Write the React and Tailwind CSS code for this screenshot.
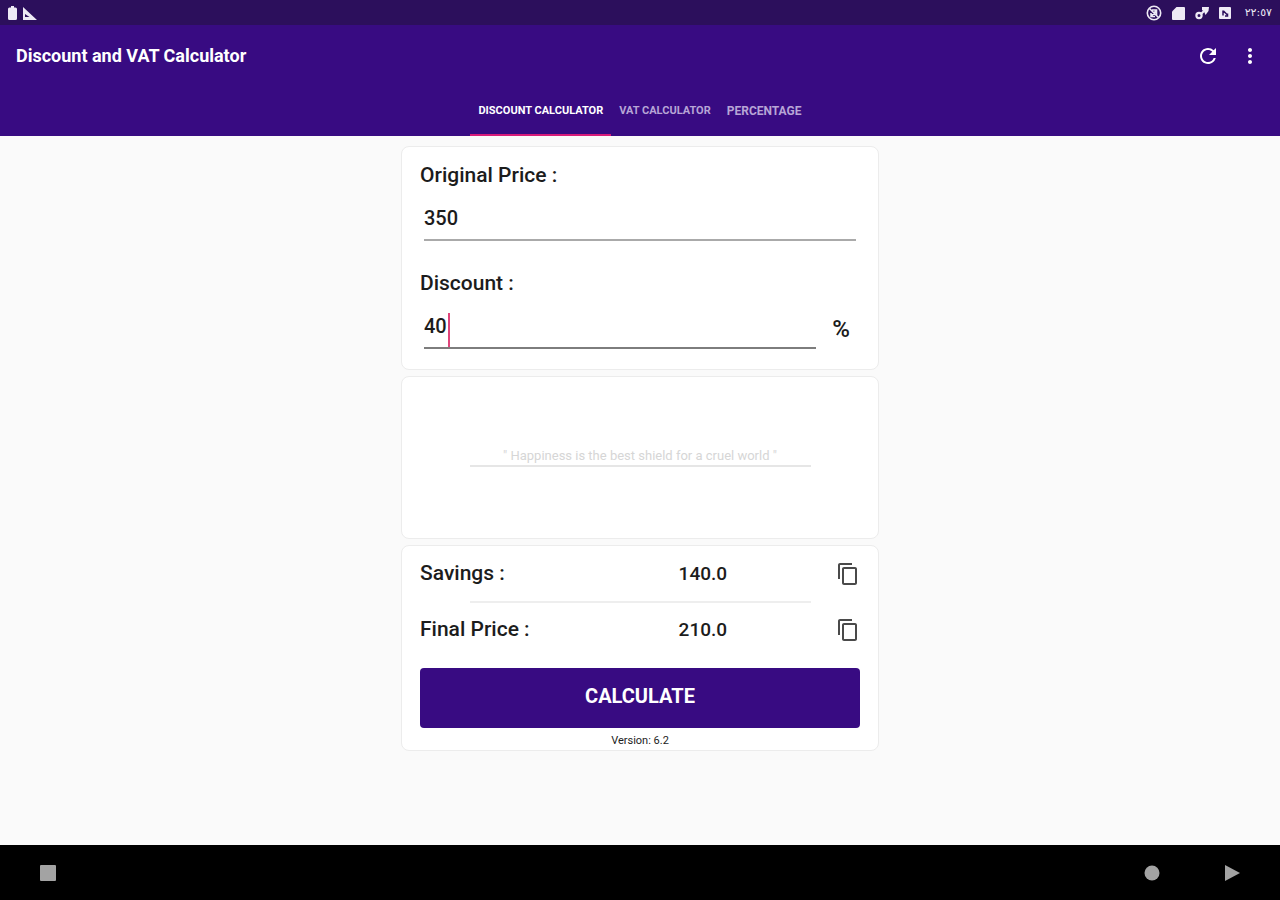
import { useState } from 'react';
import { MdContentCopy, MdMoreVert, MdRefresh } from 'react-icons/md';

const TABS = [
  { name: 'DISCOUNT CALCULATOR', size: 'text-[11px]' },
  { name: 'VAT CALCULATOR', size: 'text-[11px]' },
  { name: 'PERCENTAGE', size: 'text-xs' },
];

function StatusBar() {
  return (
    <div className="flex h-[25px] items-center justify-between bg-[#2c0f5c] px-2 text-[#eeeaf5]">
      <div className="flex items-center gap-1.5">
        <svg className="h-3.5 w-[9px]" viewBox="0 0 9 14" fill="currentColor">
          <path d="M3 0h3v1.500h1.500Q9 1.500 9 3v9.500Q9 14 7.500 14h-6Q0 14 0 12.500V3Q0 1.500 1.500 1.500H3z" />
        </svg>
        <svg className="h-3.5 w-3.5" viewBox="0 0 14 14" fill="currentColor" fillRule="evenodd">
          <path d="M0 1l14 13H0zM2 8v3h4.500z" />
        </svg>
      </div>
      <div className="flex items-center gap-2.5">
        <svg className="h-4 w-4" viewBox="0 0 16 16" fill="none" stroke="currentColor" strokeWidth="1.600">
          <circle cx="8" cy="8" r="6.700" />
          <path d="M3.500 3.500l9 9M5.500 11l5-6M6 5h4.500v5M5 8v3.500h4" />
        </svg>
        <svg className="h-3.5 w-[13px]" viewBox="0 0 13 14" fill="currentColor">
          <path d="M4.500 1H12q1 0 1 1v11q0 1-1 1H1q-1 0-1-1V5.500z" />
        </svg>
        <svg className="h-3.5 w-3.5" viewBox="0 0 14 14" fill="none" stroke="currentColor" strokeWidth="2.200">
          <circle cx="4" cy="9.500" r="2.600" />
          <path d="M6 8l3-3" />
          <path d="M7 1h7l-.5 4-3 4-1.500-3.500L7 4z" fill="currentColor" stroke="none" />
        </svg>
        <svg className="h-3 w-3" viewBox="0 0 12 12">
          <rect width="12" height="12" rx="1" fill="currentColor" />
          <path d="M4 3.500v5M4.500 4l4 4M8.500 6.500V9H6" stroke="#2c0f5c" strokeWidth="1.500" fill="none" />
        </svg>
        <span className="pl-1 font-['DejaVu_Sans',sans-serif] text-[11px] leading-3">٢٢:٥٧</span>
      </div>
    </div>
  );
}

function Header({ tab, onTab, onReset }) {
  return (
    <header className="bg-[#380b82] text-white">
      <div className="flex h-[61px] items-center justify-between pl-4 pr-[18px]">
        <h1 className="text-lg font-bold">Discount and VAT Calculator</h1>
        <div className="flex items-center gap-[18px]">
          <button type="button" aria-label="Refresh" onClick={onReset}>
            <MdRefresh className="h-6 w-6" />
          </button>
          <button type="button" aria-label="More options">
            <MdMoreVert className="h-6 w-6" />
          </button>
        </div>
      </div>
      <nav className="flex h-[50px] justify-center">
        {TABS.map(({ name, size }) => (
          <button
            key={name}
            type="button"
            onClick={() => onTab(name)}
            className={`border-b-2 px-2 pt-0.5 font-bold ${size} ${
              name === tab ? 'border-[#d81b7a] text-white' : 'border-transparent text-[#b7a5d6]'
            }`}
          >
            {name}
          </button>
        ))}
      </nav>
    </header>
  );
}

function Card({ children, className }) {
  return (
    <section className={`rounded-lg border border-[#ececec] bg-white px-[18px] ${className}`}>
      {children}
    </section>
  );
}

function ResultRow({ label, value }) {
  return (
    <div className="grid h-[54px] grid-cols-[10fr_7fr_4fr] items-center">
      <span className="text-[21px]">{label}</span>
      <span className="text-center text-[19px]">{value}</span>
      <button
        type="button"
        aria-label="Copy"
        className="justify-self-end text-[#4a4a4a]"
        onClick={() => navigator.clipboard?.writeText(value)}
      >
        <MdContentCopy className="h-6 w-6" />
      </button>
    </div>
  );
}

export default function App() {
  const [tab, setTab] = useState(TABS[0].name);
  const [price, setPrice] = useState('350');
  const [discount, setDiscount] = useState('40');
  const [savings, setSavings] = useState(140);

  const calculate = () => setSavings((Number(price) * Number(discount)) / 100);
  const reset = () => {
    setPrice('');
    setDiscount('');
    setSavings(0);
  };

  return (
    <div className="flex min-h-screen flex-col bg-[#fafafa] font-[Roboto,sans-serif] text-[#1c1c1c]">
      <StatusBar />
      <Header tab={tab} onTab={setTab} onReset={reset} />

      <main className="mx-auto flex w-full max-w-[478px] flex-1 flex-col gap-1.5 pt-2.5 text-xl font-medium">
        <Card className="pb-5 pt-3.5">
          <label htmlFor="price" className="block text-[21px] leading-7">Original Price :</label>
          <div className="mx-1 mt-2">
            <input
              id="price"
              value={price}
              onChange={(e) => setPrice(e.target.value)}
              className="block h-11 w-full border-b-2 border-[#aaaaaa] outline-none"
            />
          </div>
          <label htmlFor="discount" className="mt-7 block text-[21px] leading-7">Discount :</label>
          <div className="ml-1 mt-2 flex items-end">
            <div className="relative flex-1">
              <input
                id="discount"
                value={discount}
                onChange={(e) => setDiscount(e.target.value)}
                className="block h-11 w-full border-b-2 border-[#7d7d7d] caret-transparent outline-none"
              />
              <span
                className="absolute top-2 h-[34px] w-0.5 bg-[#e0457b]"
                style={{ left: `calc(${discount.length}ch + 1px)` }}
              />
            </div>
            <span className="w-11 pb-1 pl-1.5 text-center text-2xl">%</span>
          </div>
        </Card>

        <Card className="flex h-[163px] flex-col items-center pt-[70px]">
          <p className="text-[13px] font-normal leading-[18px] text-[#d6d6d6]">
            " Happiness is the best shield for a cruel world "
          </p>
          <hr className="w-[341px] max-w-full border-t-2 border-[#e6e6e6]" />
        </Card>

        <Card className="pt-px">
          <ResultRow label="Savings :" value={savings.toFixed(1)} />
          <hr className="mx-auto w-[341px] max-w-full border-t-2 border-[#eeeeee]" />
          <ResultRow label="Final Price :" value={(Number(price) - savings).toFixed(1)} />
          <button
            type="button"
            onClick={calculate}
            className="mt-[11px] block h-[60px] w-full rounded bg-[#380b82] pb-1 font-bold text-white"
          >
            CALCULATE
          </button>
          <p className="pt-1 text-center text-[11px] font-normal leading-[18px]">Version: 6.2</p>
        </Card>
      </main>

      <footer className="flex h-[55px] items-center justify-between bg-black px-10 text-[#a3a3a3]">
        <button type="button" aria-label="Recent apps">
          <svg className="h-4 w-4" viewBox="0 0 16 16" fill="currentColor">
            <rect width="16" height="16" rx="1" />
          </svg>
        </button>
        <div className="flex items-center gap-16">
          <button type="button" aria-label="Home">
            <svg className="h-4 w-4" viewBox="0 0 16 16" fill="currentColor">
              <circle cx="8" cy="8" r="7.500" />
            </svg>
          </button>
          <button type="button" aria-label="Back">
            <svg className="h-4 w-4" viewBox="0 0 16 16" fill="currentColor">
              <path d="M1 0l15 8-15 8z" />
            </svg>
          </button>
        </div>
      </footer>
    </div>
  );
}
